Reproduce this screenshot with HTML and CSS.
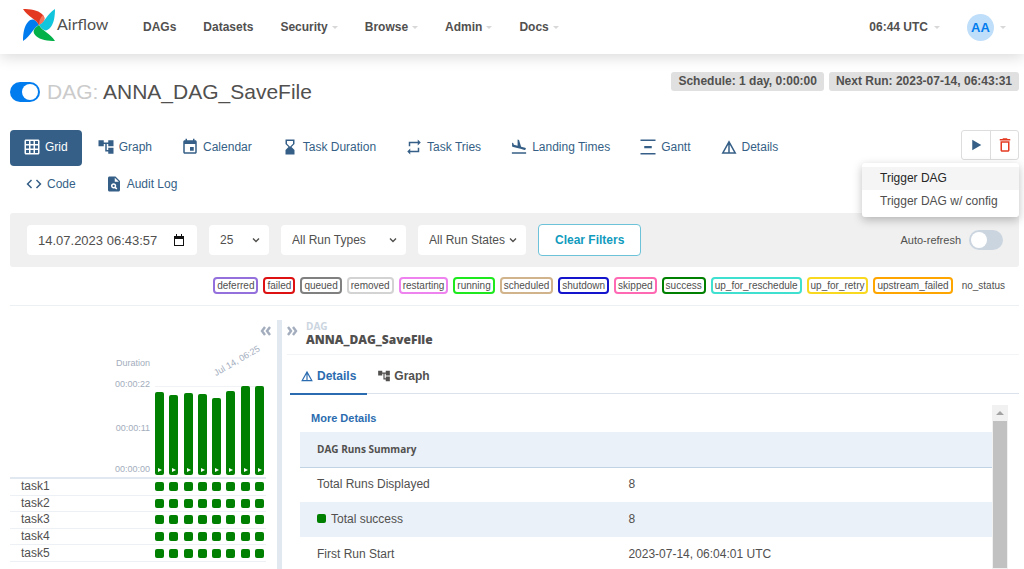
FILE: index.html
```html
<!DOCTYPE html>
<html lang="en">
<head>
    <meta charset="utf-8">
    <title>ANNA_DAG_SaveFile - Grid - Airflow</title>
    <link rel="stylesheet" href="styles.css">
</head>
<body>
    <svg class="symbols" aria-hidden="true">
        <symbol id="icon-tree" viewBox="0 0 24 24"><path d="M22 11V3h-7v3H9V3H2v8h7V8h2v10h4v3h7v-8h-7v3h-2V8h2v3z"/></symbol>
        <symbol id="icon-details" viewBox="0 0 24 24"><path d="M12 3 2 21h20L12 3zm1 5.92L18.6 19H13V8.92zm-2 0V19H5.4L11 8.92z"/></symbol>
        <symbol id="icon-down" viewBox="0 0 8 8"><path d="M1 2.500l3 3 3-3" fill="none" stroke="currentColor" stroke-width="1.400"/></symbol>
    </svg>

    <header class="navbar">
        <a href="#" class="brand">
            <svg class="brand-logo" viewBox="0 0 32 32" aria-hidden="true">
                <path fill="#017cee" transform="rotate(270 16 16)" d="M0 0C7 0 15 1 19 5C23 9 22 12 16 16C13 10 5 8 0 0z"/>
                <path fill="#04b048" transform="rotate(180 16 16)" d="M0 0C7 0 15 1 19 5C23 9 22 12 16 16C13 10 5 8 0 0z"/>
                <path fill="#11c5dc" transform="rotate(90 16 16)" d="M0 0C7 0 15 1 19 5C23 9 22 12 16 16C13 10 5 8 0 0z"/>
                <path fill="#e43921" d="M0 0C7 0 15 1 19 5C23 9 22 12 16 16C13 10 5 8 0 0z"/>
                <path fill="#f5755d" d="M16 16C21 13 23 10 20 6C17 9 16 12 16 16z"/>
            </svg>
            <span class="brand-text">Airflow</span>
        </a>
        <nav class="menu">
            <a href="#">DAGs</a>
            <a href="#">Datasets</a>
            <a href="#">Security<span class="caret"></span></a>
            <a href="#">Browse<span class="caret"></span></a>
            <a href="#">Admin<span class="caret"></span></a>
            <a href="#">Docs<span class="caret"></span></a>
        </nav>
        <div class="user-menu">
            <a href="#">06:44 UTC<span class="caret"></span></a>
            <a href="#"><span class="avatar">AA</span><span class="caret"></span></a>
        </div>
    </header>

    <main class="page">
        <div class="title-row">
            <input type="checkbox" class="switch switch-pause" id="pause" aria-label="Pause/Unpause DAG" checked>
            <h3><span class="muted">DAG:</span> ANNA_DAG_SaveFile</h3>
            <div class="badges">
                <a href="#" class="badge">Schedule: 1 day, 0:00:00</a>
                <span class="badge">Next Run: 2023-07-14, 06:43:31</span>
            </div>
        </div>

        <div class="nav-row">
            <ul class="pills">
                <li><a href="#" class="active">
                    <svg class="icon" viewBox="0 0 24 24"><path d="M20 2H4c-1.100 0-2 .9-2 2v16c0 1.100.9 2 2 2h16c1.100 0 2-.9 2-2V4c0-1.100-.9-2-2-2zM8 20H4v-4h4v4zm0-6H4v-4h4v4zm0-6H4V4h4v4zm6 12h-4v-4h4v4zm0-6h-4v-4h4v4zm0-6h-4V4h4v4zm6 12h-4v-4h4v4zm0-6h-4v-4h4v4zm0-6h-4V4h4v4z"/></svg>
                    Grid</a></li>
                <li><a href="#">
                    <svg class="icon"><use href="#icon-tree"/></svg>
                    Graph</a></li>
                <li><a href="#">
                    <svg class="icon" viewBox="0 0 24 24"><path d="M17 12h-5v5h5v-5zM16 1v2H8V1H6v2H5c-1.110 0-1.990.9-1.990 2L3 19c0 1.100.89 2 2 2h14c1.100 0 2-.9 2-2V5c0-1.100-.9-2-2-2h-1V1h-2zm3 18H5V8h14v11z"/></svg>
                    Calendar</a></li>
                <li><a href="#">
                    <svg class="icon" viewBox="0 0 24 24"><path d="M18 22l-.01-6L14 12l3.990-4.010L18 2H6v6l4 4-4 3.990V22h12zM8 7.500V4h8v3.500l-4 4-4-4z"/></svg>
                    Task Duration</a></li>
                <li><a href="#">
                    <svg class="icon" viewBox="0 0 24 24"><path d="M7 7h10v3l4-4-4-4v3H5v6h2V7zm10 10H7v-3l-4 4 4 4v-3h12v-6h-2v4z"/></svg>
                    Task Tries</a></li>
                <li><a href="#">
                    <svg class="icon" viewBox="0 0 24 24"><path d="M2.500 19h19v2h-19v-2zm7.180-5.730l4.350 1.160 5.310 1.420c.8.21 1.620-.26 1.840-1.060.21-.8-.26-1.620-1.060-1.840l-5.310-1.420-2.760-9.020L10.120 2v8.280L5.150 8.950l-.93-2.320-1.450-.39v5.170l1.600.43 5.310 1.430z"/></svg>
                    Landing Times</a></li>
                <li><a href="#">
                    <svg class="icon" viewBox="0 0 24 24"><path d="M22 2v2H2V2h20zM7 10.500v3h10v-3H7zM2 20v2h20v-2H2z"/></svg>
                    Gantt</a></li>
                <li><a href="#">
                    <svg class="icon"><use href="#icon-details"/></svg>
                    Details</a></li>
                <li><a href="#">
                    <svg class="icon" viewBox="0 0 24 24"><path d="M9.400 16.600L4.800 12l4.600-4.600L8 6l-6 6 6 6 1.400-1.400zm5.200 0l4.600-4.600-4.600-4.600L16 6l6 6-6 6-1.400-1.400z"/></svg>
                    Code</a></li>
                <li><a href="#">
                    <svg class="icon" viewBox="0 0 24 24"><path d="M14 2H6c-1.100 0-1.990.9-1.990 2L4 20c0 1.100.89 2 1.990 2H18c1.100 0 2-.9 2-2V8l-6-6zm1.040 17.450l-1.880-1.880c-1.330.71-3.010.53-4.130-.59-1.370-1.370-1.370-3.580 0-4.950 1.370-1.370 3.580-1.370 4.950 0 1.120 1.120 1.310 2.800.59 4.130l1.880 1.880-1.410 1.410zM13 9V3.500L18.500 9H13z"/><circle cx="11.500" cy="14.500" r="1.500"/></svg>
                    Audit Log</a></li>
            </ul>
            <div class="actions">
                <div class="button-group">
                    <button type="button" aria-label="Trigger DAG"><svg class="icon" viewBox="0 0 24 24"><path d="M7 5v14l12-7z"/></svg></button>
                    <button type="button" class="danger" aria-label="Delete DAG"><svg class="icon" viewBox="0 0 24 24"><path d="M6 19c0 1.100.9 2 2 2h8c1.100 0 2-.9 2-2V7H6v12zM8 9h8v10H8V9zm7.500-5l-1-1h-5l-1 1H5v2h14V4z"/></svg></button>
                </div>
                <ul class="dropdown">
                    <li><a href="#" class="hovered">Trigger DAG</a></li>
                    <li><a href="#">Trigger DAG w/ config</a></li>
                </ul>
            </div>
        </div>

        <form class="filters">
            <div class="field field-date">
                <input type="text" value="14.07.2023 06:43:57" aria-label="Base date">
                <svg class="field-icon calendar-icon" viewBox="0 0 12 12"><path fill-rule="evenodd" d="M1 2h2V0h1v2h4V0h1v2h2v10H1zM2 5v6h8V5z"/></svg>
            </div>
            <div class="field field-count">
                <select aria-label="Number of runs"><option>25</option></select>
                <svg class="field-icon"><use href="#icon-down"/></svg>
            </div>
            <div class="field field-types">
                <select aria-label="Run types"><option>All Run Types</option></select>
                <svg class="field-icon"><use href="#icon-down"/></svg>
            </div>
            <div class="field field-states">
                <select aria-label="Run states"><option>All Run States</option></select>
                <svg class="field-icon"><use href="#icon-down"/></svg>
            </div>
            <button type="button" class="clear-button">Clear Filters</button>
            <label class="auto-refresh">Auto-refresh <input type="checkbox" class="switch switch-refresh"></label>
        </form>

        <div class="legend">
            <span class="state deferred">deferred</span>
            <span class="state failed">failed</span>
            <span class="state queued">queued</span>
            <span class="state removed">removed</span>
            <span class="state restarting">restarting</span>
            <span class="state running">running</span>
            <span class="state scheduled">scheduled</span>
            <span class="state shutdown">shutdown</span>
            <span class="state skipped">skipped</span>
            <span class="state success">success</span>
            <span class="state up-for-reschedule">up_for_reschedule</span>
            <span class="state up-for-retry">up_for_retry</span>
            <span class="state upstream-failed">upstream_failed</span>
            <span class="state no-status">no_status</span>
        </div>

        <div class="panels">
            <section class="grid-panel">
                <button type="button" class="collapse" aria-label="Hide grid"><svg viewBox="0 0 12 12"><path d="M6 2L3 6l3 4M11 2L8 6l3 4"/></svg></button>
                <div class="chart">
                    <div class="axis">
                        <span>Duration</span>
                        <span>00:00:22</span>
                        <span>00:00:11</span>
                        <span>00:00:00</span>
                    </div>
                    <div class="bars" id="bars">
                        <span class="run-date">Jul 14, 06:25</span>
                    </div>
                </div>
                <table class="tasks">
                    <tbody id="tasks"></tbody>
                </table>
            </section>

            <section class="details-panel">
                <div class="details-head">
                    <button type="button" class="collapse" aria-label="Hide details"><svg viewBox="0 0 12 12"><path d="M1 2l3 4-3 4M6 2l3 4-3 4"/></svg></button>
                    <div class="breadcrumb">
                        <small>DAG</small>
                        <strong>ANNA_DAG_SaveFile</strong>
                    </div>
                </div>
                <div class="tabs">
                    <button type="button" class="tab selected"><svg><use href="#icon-details"/></svg>Details</button>
                    <button type="button" class="tab"><svg><use href="#icon-tree"/></svg>Graph</button>
                </div>
                <div class="details-body">
                    <div class="details-content">
                        <a href="#" class="more">More Details</a>
                        <table class="summary">
                            <thead>
                                <tr><th colspan="2">DAG Runs Summary</th></tr>
                            </thead>
                            <tbody>
                                <tr><td>Total Runs Displayed</td><td>8</td></tr>
                                <tr><td><span class="dot"></span>Total success</td><td>8</td></tr>
                                <tr><td>First Run Start</td><td>2023-07-14, 06:04:01 UTC</td></tr>
                            </tbody>
                        </table>
                    </div>
                    <div class="scrollbar"><span class="scroll-up"></span></div>
                </div>
            </section>
        </div>
    </main>

    <script>
        // bar heights of the last runs, in px
        const runs = [83, 80, 82, 81, 77, 84, 89, 89];
        const tasks = ['task1', 'task2', 'task3', 'task4', 'task5'];

        let barsHTML = '';
        runs.forEach(height => {
            barsHTML += '<div class="bar" style="height: ' + height + 'px"></div>';
        });
        document.getElementById('bars').insertAdjacentHTML('beforeend', barsHTML);

        const squares = '<span class="square"></span>'.repeat(runs.length);
        document.getElementById('tasks').innerHTML = tasks.map(task =>
            '<tr><th>' + task + '</th><td><div class="squares">' + squares + '</div></td></tr>'
        ).join('');
    </script>
</body>
</html>
```
FILE: styles.css
```css
* {
    box-sizing: border-box;
}
body {
    display: flex;
    flex-direction: column;
    height: 100vh;
    margin: 0;
    overflow: hidden;
    font-family: "Liberation Sans", Arial, sans-serif;
    font-size: 12px;
    color: #51504f;
    background-color: #fff;
}
a {
    color: inherit;
    text-decoration: none;
}
ul {
    list-style: none;
    margin: 0;
    padding: 0;
}
button, input, select {
    font: inherit;
    color: inherit;
    margin: 0;
}
svg {
    fill: currentColor;
    flex-shrink: 0;
}
.symbols {
    position: absolute;
    width: 0;
    height: 0;
}

/* top bar */
.navbar {
    display: flex;
    align-items: center;
    height: 54px;
    flex-shrink: 0;
    padding: 0 18px 0 23px;
    font-weight: bold;
    box-shadow: 0 3px 14px rgba(0, 0, 0, 0.15);
}
.brand {
    display: flex;
    align-items: center;
    gap: 2px;
    width: 120px;
    padding-bottom: 4px;
}
.brand-logo {
    width: 32px;
    height: 32px;
}
.brand-text {
    padding-bottom: 4px;
    font-family: Lato, sans-serif;
    font-size: 16px;
    font-weight: normal;
}
.menu, .user-menu {
    display: flex;
    align-items: center;
    gap: 27px;
}
.menu a, .user-menu a {
    display: flex;
    align-items: center;
}
.user-menu {
    margin-left: auto;
}
.caret {
    margin-left: 4px;
    border: 3px solid transparent;
    border-top-color: #d8d8d8;
    border-bottom: 0;
}
.user-menu .caret {
    margin-left: 6px;
}
.avatar {
    width: 27px;
    height: 27px;
    border-radius: 50%;
    line-height: 27px;
    text-align: center;
    font-size: 13px;
    color: #017cee;
    background-color: #bfdefa;
}

.page {
    display: flex;
    flex-direction: column;
    flex: 1;
    min-height: 0;
    padding: 18px 5px 0 10px;
}

/* dag title */
.title-row {
    display: flex;
    align-items: center;
    gap: 7px;
    height: 40px;
    margin-bottom: 18px;
}
.title-row h3 {
    margin: 0;
    font-size: 21px;
    font-weight: normal;
}
.muted {
    color: #cbcbcb;
}
.switch {
    position: relative;
    appearance: none;
    border-radius: 10px;
    background-color: #cbd5e0;
}
.switch::after {
    content: "";
    position: absolute;
    top: 2px;
    left: 2px;
    width: 16px;
    height: 16px;
    border-radius: 50%;
    background-color: #fff;
}
.switch-pause {
    width: 30px;
    height: 20px;
}
.switch-pause:checked {
    background-color: #017cee;
}
.switch-pause:checked::after {
    left: 12px;
}
.switch-refresh {
    width: 34px;
    height: 20px;
}
.badges {
    display: flex;
    align-self: flex-start;
    gap: 5px;
    margin-left: auto;
}
.badge {
    padding: 0 7px;
    border-radius: 3px;
    line-height: 19px;
    font-weight: bold;
    background-color: #e0e0e0;
}

/* view links */
.nav-row {
    display: grid;
    grid-template-columns: 5fr 1fr;
    margin-bottom: 10px;
}
.pills {
    display: flex;
    flex-wrap: wrap;
    row-gap: 1px;
}
.pills li + li {
    margin-left: 2px;
}
.pills a {
    display: flex;
    align-items: center;
    gap: 4px;
    height: 36px;
    padding: 0 14px 2px 13px;
    border-radius: 4px;
    color: #355f86;
}
.pills .active {
    color: #fff;
    background-color: #355f86;
}
.icon {
    width: 18px;
    height: 18px;
}
.actions {
    position: relative;
    display: flex;
    justify-content: flex-end;
    align-items: flex-start;
}
.button-group {
    display: flex;
    border: 1px solid #ddd;
    border-radius: 3px;
}
.button-group button {
    display: flex;
    align-items: center;
    justify-content: center;
    width: 28px;
    height: 28px;
    padding: 0;
    border: 0;
    color: #355f86;
    background: none;
}
.button-group .danger {
    border-left: 1px solid #ddd;
    color: #e43921;
}
.dropdown {
    position: absolute;
    top: 33px;
    right: 0;
    z-index: 1;
    min-width: 157px;
    padding: 4px 0;
    border-radius: 3px;
    white-space: nowrap;
    background-color: #fff;
    box-shadow: 0 3px 10px rgba(0, 0, 0, 0.25);
}
.dropdown a {
    display: block;
    padding: 0 18px;
    line-height: 23px;
}
.dropdown .hovered {
    color: #262626;
    background-color: #f5f5f5;
}

/* filter bar */
.filters {
    display: flex;
    align-items: center;
    gap: 12px;
    padding: 11px 16px 11px 17px;
    border-radius: 3px;
    background-color: #f0f0f0;
}
.field {
    position: relative;
}
.field input, .field select {
    display: block;
    appearance: none;
    width: 100%;
    height: 30px;
    padding: 0 11px;
    border: 0;
    border-radius: 4px;
    background-color: #fff;
}
.field input {
    font-size: 13px;
}
.field-icon {
    position: absolute;
    top: 11px;
    right: 9px;
    width: 8px;
    height: 8px;
    pointer-events: none;
}
.calendar-icon {
    top: 9px;
    right: 12px;
    width: 12px;
    height: 12px;
    color: #111;
}
.field-date {
    width: 170px;
}
.field-count {
    width: 60px;
}
.field-types {
    width: 125px;
}
.field-states {
    width: 108px;
}
.clear-button {
    height: 32px;
    padding: 0 16px;
    border: 1px solid #6cc3d9;
    border-radius: 4px;
    font-weight: bold;
    color: #119bbd;
    background-color: #fff;
}
.auto-refresh {
    display: flex;
    align-items: center;
    gap: 8px;
    margin-left: auto;
    font-size: 11px;
}

/* state legend */
.legend {
    display: flex;
    justify-content: flex-end;
    gap: 5px;
    padding: 10px 10px 11px 0;
    border-bottom: 1px solid #edf0f2;
    font-size: 10px;
}
.state {
    padding: 0 2px;
    border: 2px solid transparent;
    border-radius: 4px;
    line-height: 13px;
}
.deferred { border-color: mediumpurple; }
.failed { border-color: #dd1111; }
.queued { border-color: gray; }
.removed { border-color: lightgrey; }
.restarting { border-color: violet; }
.running { border-color: #1ee81e; }
.scheduled { border-color: tan; }
.shutdown { border-color: #1414cc; }
.skipped { border-color: hotpink; }
.success { border-color: green; }
.up-for-reschedule { border-color: turquoise; }
.up-for-retry { border-color: #f8d920; }
.upstream-failed { border-color: orange; }

/* grid */
.panels {
    display: flex;
    flex: 1;
    min-height: 0;
    margin-top: 14px;
}
.grid-panel {
    display: flex;
    flex-direction: column;
    width: 272px;
    flex-shrink: 0;
    padding: 5px 11px 0 0;
    border-right: 5px solid #e2e8f0;
}
.collapse {
    align-self: flex-end;
    width: 12px;
    height: 12px;
    padding: 0;
    border: 0;
    background: none;
}
.grid-panel .collapse {
    margin-right: -5px;
}
.collapse svg {
    display: block;
    width: 12px;
    height: 12px;
    fill: none;
    stroke: #a3adbd;
    stroke-width: 2.400;
}
.chart {
    display: flex;
    align-items: flex-end;
    justify-content: flex-end;
    gap: 5px;
    height: 142px;
    padding: 0 2px 2px 0;
    border-bottom: 2px solid #e2e8f0;
}
.axis {
    display: grid;
    grid-template-rows: 21px 44px 41px 12px;
    line-height: 12px;
    font-size: 9px;
    text-align: right;
    color: #a3adbd;
}
.bars, .squares {
    display: flex;
    align-items: flex-end;
    justify-content: space-between;
    width: 109px;
}
.bars {
    position: relative;
    height: 89px;
    border-top: 1px solid #f0f2f6;
}
.bar {
    position: relative;
    width: 9px;
    border-radius: 2px;
    background-color: green;
}
.bar::after {
    content: "";
    position: absolute;
    left: 3px;
    bottom: 3px;
    border: 2px solid transparent;
    border-left: 4px solid #fff;
    border-right: 0;
}
.run-date {
    position: absolute;
    bottom: 97px;
    left: 62px;
    font-size: 9px;
    white-space: nowrap;
    color: #a3adbd;
    transform: rotate(-30deg);
    transform-origin: left bottom;
}
.tasks {
    width: 100%;
    height: 83px;
    border-collapse: collapse;
}
.tasks th, .tasks td {
    padding: 0;
    border-bottom: 1px solid #edf0f5;
    line-height: 15px;
}
.tasks th {
    padding-left: 11px;
    font-weight: normal;
    text-align: left;
}
.squares {
    margin: 0 2px 0 auto;
}
.square {
    width: 9px;
    height: 9px;
    border-radius: 2px;
    background-color: green;
}

/* details */
.details-panel {
    display: flex;
    flex-direction: column;
    flex: 1;
    padding-left: 8px;
}
.details-head {
    display: flex;
    align-items: flex-start;
    gap: 7px;
    height: 35px;
    margin-left: -3px;
    border-bottom: 1px solid #f3f4f6;
}
.details-head .collapse {
    align-self: flex-start;
    margin-top: 5px;
}
.breadcrumb {
    display: flex;
    flex-direction: column;
    font-family: "Open Sans", "Noto Sans", sans-serif;
    font-weight: bold;
}
.breadcrumb small {
    line-height: 13px;
    font-size: 10px;
    color: #cbd5e0;
}
.breadcrumb strong {
    line-height: 13px;
    font-size: 12px;
}
.tabs {
    display: flex;
    height: 39px;
    border-bottom: 1px solid #dbe2ec;
}
.tab {
    display: flex;
    align-items: center;
    gap: 3px;
    height: 40px;
    padding: 3px 11px 0 10px;
    border: 0;
    border-bottom: 2px solid transparent;
    font-weight: bold;
    background: none;
}
.tab svg {
    width: 14px;
    height: 14px;
}
.selected {
    color: #2b6cb0;
    border-bottom-color: #2b6cb0;
}
.details-body {
    display: flex;
    flex: 1;
    min-height: 0;
    padding: 11px 11px 0 10px;
}
.details-content {
    flex: 1;
    overflow: hidden;
}
.more {
    display: block;
    height: 27px;
    padding-left: 11px;
    line-height: 26px;
    font-size: 11px;
    font-weight: bold;
    color: #2b6cb0;
}
.summary {
    width: 100%;
    border-collapse: collapse;
}
.summary th, .summary td {
    height: 35px;
    padding: 0 17px 1px;
    text-align: left;
}
.summary th {
    border-bottom: 1px solid #bfd3e2;
    font-family: "Open Sans", "Noto Sans", sans-serif;
    font-size: 10px;
    background-color: #ebf1f8;
}
.summary td:first-child {
    width: 45%;
}
.summary tbody tr:nth-child(even) {
    background-color: #ebf1f8;
}
.dot {
    display: inline-block;
    width: 9px;
    height: 9px;
    margin-right: 5px;
    border-radius: 2px;
    background-color: green;
}
.scrollbar {
    width: 16px;
    border: 1px solid #f1f1f1;
    border-top: 0;
    background-color: #c1c1c1;
}
.scroll-up {
    display: flex;
    align-items: center;
    justify-content: center;
    height: 16px;
    background-color: #f1f1f1;
}
.scroll-up::after {
    content: "";
    border: 4px solid transparent;
    border-bottom-color: #a3a3a3;
    border-top: 0;
}
```
